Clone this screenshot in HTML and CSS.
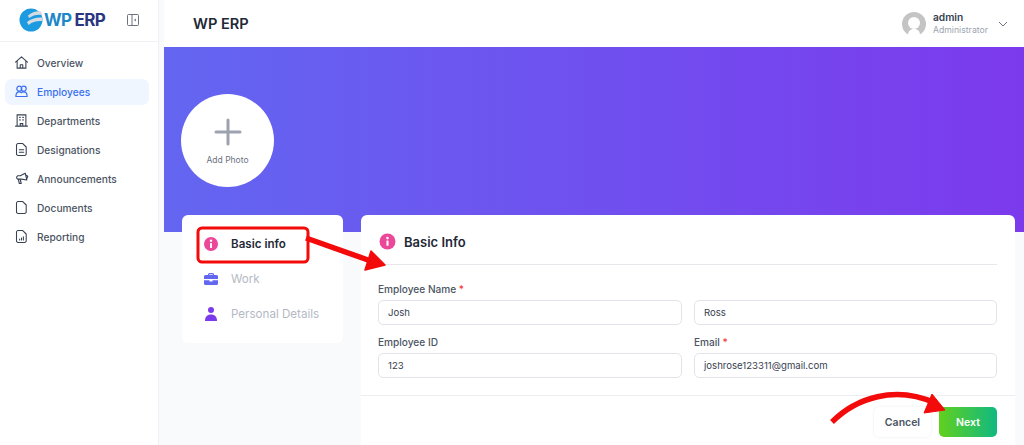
FILE: index.html
```html
<!DOCTYPE html>
<html lang="en">
<head>
    <meta charset="UTF-8">
    <meta name="viewport" content="width=device-width, initial-scale=1.0">
    <title>WP ERP</title>
    <link rel="stylesheet" href="styles.css">
</head>
<body>
    <aside class="sidebar">
        <div class="brand">
            <svg class="brand-mark" viewBox="0 0 24 24" width="24" height="24">
                <circle cx="12" cy="12" r="11.5" fill="#1d9be0"/>
                <path d="M9 7.5C13 4 18 2.5 22 3.5L23.5 7C19 6 14 7 10 10Z" fill="#d5dbe2"/>
                <path d="M8 14C12 10.5 18 9 23.5 9.5L23 13C18 12.5 13 14 9.5 17Z" fill="#d5dbe2"/>
            </svg>
            <span class="brand-wp">WP</span>
            <span class="brand-erp">ERP</span>
            <svg class="collapse" viewBox="0 0 14 14" width="14" height="14" fill="none" stroke="#6b7280" stroke-width="1">
                <rect x="1.5" y="1.5" width="11" height="11" rx="1"/>
                <path d="M6 1.5V12.5M10 6L8.5 7L10 8"/>
            </svg>
        </div>
        <nav class="nav">
            <a class="nav-item">
                <svg viewBox="0 0 24 24" fill="none" stroke="currentColor" stroke-width="1.7" stroke-linejoin="round" stroke-linecap="round"><path d="M2.5 11.5L12 3l9.5 8.5M5 9.5V21h14V9.5M10 21v-5.500h4V21"/></svg>
                <span>Overview</span>
            </a>
            <a class="nav-item active">
                <svg viewBox="0 0 24 24" fill="none" stroke="currentColor" stroke-width="1.9" stroke-linejoin="round"><circle cx="8.500" cy="7.500" r="4"/><circle cx="15.500" cy="7.500" r="4"/><path d="M3 20c0-5 2.500-7.500 5.500-7.500 1.500 0 2.700.5 3.500 1.500.8-1 2-1.500 3.500-1.500 3 0 5.500 2.500 5.500 7.500z"/></svg>
                <span>Employees</span>
            </a>
            <a class="nav-item">
                <svg viewBox="0 0 24 24" fill="none" stroke="currentColor" stroke-width="1.7" stroke-linecap="round"><path d="M5 21V3h14v18M2.500 21h19M10 21v-4h4v4M9 7h1M14 7h1M9 11h1M14 11h1"/></svg>
                <span>Departments</span>
            </a>
            <a class="nav-item">
                <svg viewBox="0 0 24 24" fill="none" stroke="currentColor" stroke-width="1.7" stroke-linecap="round" stroke-linejoin="round"><path d="M6.500 2.500H14L19.500 8v11a2.500 2.500 0 0 1-2.500 2.500H6.500A2.500 2.500 0 0 1 4 19V5a2.500 2.500 0 0 1 2.500-2.500zM8.500 12.500h7M8.500 16.500h7"/></svg>
                <span>Designations</span>
            </a>
            <a class="nav-item">
                <svg viewBox="0 0 24 24" fill="none" stroke="currentColor" stroke-width="1.8" stroke-linecap="round" stroke-linejoin="round"><path d="M10 7.500L18 3.500l2.500 11-8.500-1.500H6a3 3 0 0 1 0-5.500zM7 13.500l1.500 6.500h3l-1.500-6.500M20 7l2 1.500-1 3"/></svg>
                <span>Announcements</span>
            </a>
            <a class="nav-item">
                <svg viewBox="0 0 24 24" fill="none" stroke="currentColor" stroke-width="1.7" stroke-linejoin="round"><path d="M6.500 2.500H14L19.500 8v11a2.500 2.500 0 0 1-2.500 2.500H6.500A2.500 2.500 0 0 1 4 19V5a2.500 2.500 0 0 1 2.500-2.500z"/></svg>
                <span>Documents</span>
            </a>
            <a class="nav-item">
                <svg viewBox="0 0 24 24" fill="none" stroke="currentColor" stroke-width="1.7" stroke-linecap="round" stroke-linejoin="round"><path d="M6.500 2.500H14L19.500 8v11a2.500 2.500 0 0 1-2.500 2.500H6.500A2.500 2.500 0 0 1 4 19V5a2.500 2.500 0 0 1 2.500-2.500zM9 17.500v-1.500M12 17.500v-3M15 17.500v-5"/></svg>
                <span>Reporting</span>
            </a>
        </nav>
    </aside>

    <main class="main">
        <header class="topbar">
            <div class="page-title">WP ERP</div>
            <div class="user">
                <svg class="avatar" viewBox="0 0 24 24" width="24" height="24">
                    <circle cx="12" cy="12" r="12" fill="#c4c4c4"/>
                    <circle cx="12" cy="11" r="6" fill="#fff"/>
                    <path d="M6 24c0-5 2-7 6-7s6 2 6 7z" fill="#fff"/>
                </svg>
                <div class="user-text">
                    <div class="user-name">admin</div>
                    <div class="user-role">Administrator</div>
                </div>
                <svg class="chevron" viewBox="0 0 10 6" width="10" height="6" fill="none" stroke="#6b7280" stroke-width="1"><path d="M1 1l4 4 4-4"/></svg>
            </div>
        </header>

        <section class="hero">
            <div class="photo">
                <svg viewBox="0 0 28 28" width="28" height="28" fill="none" stroke="#9ca3af" stroke-width="3" stroke-linecap="round"><path d="M14 2v24M2 14h24"/></svg>
                <span class="photo-label">Add Photo</span>
            </div>
        </section>

        <div class="content">
            <div class="steps">
                <div class="step current">
                    <svg viewBox="0 0 16 16" width="16" height="16"><circle cx="8" cy="8" r="7" fill="#ec4899"/><rect x="7" y="7" width="2" height="5" rx=".5" fill="#fff"/><circle cx="8" cy="4.800" r="1.200" fill="#fff"/></svg>
                    <span>Basic info</span>
                </div>
                <div class="step">
                    <svg viewBox="0 0 16 16" width="16" height="16" fill="#6366f1"><path d="M5 3.500A1.500 1.500 0 0 1 6.500 2h3A1.500 1.500 0 0 1 11 3.500V4h2.500A1.500 1.500 0 0 1 15 5.500V8H1V5.500A1.500 1.500 0 0 1 2.500 4H5zM6.300 4h3.400v-.7H6.300z"/><path d="M1 9.200h5.500v1.300h3V9.200H15v3.300a1.500 1.500 0 0 1-1.500 1.500h-11A1.500 1.500 0 0 1 1 12.500z"/></svg>
                    <span>Work</span>
                </div>
                <div class="step">
                    <svg viewBox="0 0 16 16" width="16" height="16" fill="#7c3aed"><circle cx="8" cy="4" r="3"/><path d="M2 15c0-4 2-6.500 6-6.500s6 2.500 6 6.500z"/></svg>
                    <span>Personal Details</span>
                </div>
            </div>

            <div class="card">
                <div class="card-head">
                    <svg viewBox="0 0 16 16" width="17" height="17"><circle cx="8" cy="8" r="7.500" fill="#ec4899"/><rect x="7" y="7" width="2" height="5" rx=".5" fill="#fff"/><circle cx="8" cy="4.800" r="1.200" fill="#fff"/></svg>
                    <h2>Basic Info</h2>
                </div>
                <div class="form">
                    <div class="field">
                        <label>Employee Name <span class="req">*</span></label>
                        <div class="input">Josh</div>
                    </div>
                    <div class="field">
                        <label>&nbsp;</label>
                        <div class="input">Ross</div>
                    </div>
                    <div class="field">
                        <label>Employee ID</label>
                        <div class="input">123</div>
                    </div>
                    <div class="field">
                        <label>Email <span class="req">*</span></label>
                        <div class="input">joshrose123311@gmail.com</div>
                    </div>
                </div>
                <div class="card-foot">
                    <button class="btn-cancel">Cancel</button>
                    <button class="btn-next">Next</button>
                </div>
            </div>
        </div>
    </main>

    <!-- red annotations drawn over the screenshot -->
    <svg class="marks" viewBox="0 0 1024 445" width="1024" height="445" fill="none">
        <rect x="198" y="228" width="110" height="34" rx="4" stroke="#f30a0a" stroke-width="3"/>
        <path d="M306 238L368 260" stroke="#f30a0a" stroke-width="5.500"/>
        <path d="M371 251L385 265L365 270Z" fill="#f30a0a" stroke="#f30a0a" stroke-width="1.500" stroke-linejoin="round"/>
        <path d="M832 422C856 398 895 385 935 403" stroke="#f30a0a" stroke-width="5.500"/>
        <path d="M932 394L945 410L924 413Z" fill="#f30a0a" stroke="#f30a0a" stroke-width="1" stroke-linejoin="round"/>
    </svg>
</body>
</html>
```

FILE: styles.css
```css
* {
    box-sizing: border-box;
}

html, body {
    height: 445px;
    overflow: hidden;
}

body {
    margin: 0;
    position: relative;
    display: flex;
    font-family: Inter, "Liberation Sans", sans-serif;
    background-color: #f8fafc;
    color: #1f2937;
}

.sidebar {
    width: 159px;
    flex-shrink: 0;
    background-color: #fff;
    border-right: 1px solid #eef0f3;
}

.brand {
    height: 42px;
    display: flex;
    align-items: center;
    padding: 0 0 2px 19px;
    border-bottom: 1px solid #eef0f3;
    font-size: 17px;
    font-weight: 700;
    letter-spacing: -0.6px;
}

.brand-wp {
    color: #1d87c9;
    margin: 0 3px 0 1px;
}

.brand-erp {
    color: #2b3580;
}

.collapse {
    margin-left: 21px;
}

.nav {
    padding: 6px 9px 0 5px;
}

.nav-item {
    height: 29px;
    display: flex;
    align-items: center;
    gap: 8px;
    padding-left: 9px;
    border-radius: 7px;
    font-size: 10.200px;
    font-weight: 500;
    color: #374151;
}

.nav-item span {
    color: #4b5563;
}

.nav-item svg {
    width: 15px;
    height: 15px;
}

.nav-item.active {
    height: 26px;
    margin: 1.500px 0;
    background-color: #eff6ff;
    color: #3b6ff0;
}

.nav-item.active span {
    color: #3b6ff0;
}

.main {
    flex: 1;
    margin-left: 5px;
    min-width: 0;
}

.topbar {
    height: 47px;
    background-color: #fff;
    display: flex;
    align-items: center;
    justify-content: space-between;
    padding: 0 16px 0 29px;
}

.page-title {
    font-size: 14.600px;
    font-weight: 600;
    color: #1f2937;
}

.user {
    display: flex;
    align-items: center;
}

.avatar {
    margin-right: 7px;
}

.user-name {
    font-size: 10.200px;
    font-weight: 600;
    line-height: 14px;
    color: #374151;
}

.user-role {
    font-size: 8.700px;
    line-height: 13px;
    color: #9ca3af;
}

.chevron {
    margin-left: 10px;
}

.hero {
    height: 185px;
    padding: 47px 0 0 17px;
    background: linear-gradient(90deg, #6366f1, #7c3aed);
}

.photo {
    width: 93px;
    height: 93px;
    border-radius: 50%;
    background-color: #fff;
    display: flex;
    flex-direction: column;
    align-items: center;
    padding-top: 24px;
}

.photo-label {
    margin-top: 9px;
    font-size: 8.500px;
    color: #6b7280;
}

.content {
    display: flex;
    align-items: flex-start;
    gap: 18px;
    margin-top: -17px;
    padding: 0 9px 0 18px;
}

.steps {
    width: 161px;
    height: 128px;
    flex-shrink: 0;
    padding: 11px 0 0 21px;
    background-color: #fff;
    border-radius: 6px;
}

.step {
    height: 35px;
    display: flex;
    align-items: center;
    gap: 12px;
    font-size: 11.600px;
    color: #b4b9c4;
}

.step.current {
    font-weight: 600;
    color: #1f2937;
}

.card {
    flex: 1;
    height: 240px;
    background-color: #fff;
    border-radius: 6px;
    display: flex;
    flex-direction: column;
}

.card-head {
    height: 50px;
    margin: 0 18px 0 18px;
    padding-top: 4px;
    display: flex;
    align-items: center;
    gap: 8px;
    border-bottom: 1px solid #e5e7eb;
}

.card-head h2 {
    margin: 0;
    font-size: 13px;
    font-weight: 600;
    color: #1f2937;
}

.form {
    display: grid;
    grid-template-columns: 304px 303px;
    column-gap: 12px;
    row-gap: 10px;
    padding: 17px 0 0 17px;
}

.field label {
    display: block;
    height: 16px;
    margin-bottom: 2px;
    font-size: 10.100px;
    font-weight: 500;
    line-height: 14px;
    color: #4b5563;
}

.req {
    color: #ef4444;
}

.input {
    height: 25px;
    padding-left: 9px;
    border: 1px solid #e2e4ea;
    border-radius: 5px;
    font-size: 9.600px;
    line-height: 23px;
    color: #374151;
}

.card-foot {
    margin-top: 17px;
    padding: 11px 18px 0 0;
    border-top: 1px solid #eceef1;
    display: flex;
    justify-content: flex-end;
    gap: 8px;
}

.card-foot button {
    height: 30px;
    border: none;
    border-radius: 5px;
    font-family: inherit;
    font-size: 10.500px;
    font-weight: 600;
}

.btn-cancel {
    width: 57px;
    background-color: #fff;
    color: #4b5563;
    box-shadow: 0 0 3px rgba(0, 0, 0, 0.08);
}

.btn-next {
    width: 58px;
    background: linear-gradient(90deg, #62d01e, #10b981);
    color: #fff;
}

.marks {
    position: absolute;
    left: 0;
    top: 0;
    pointer-events: none;
}
```
